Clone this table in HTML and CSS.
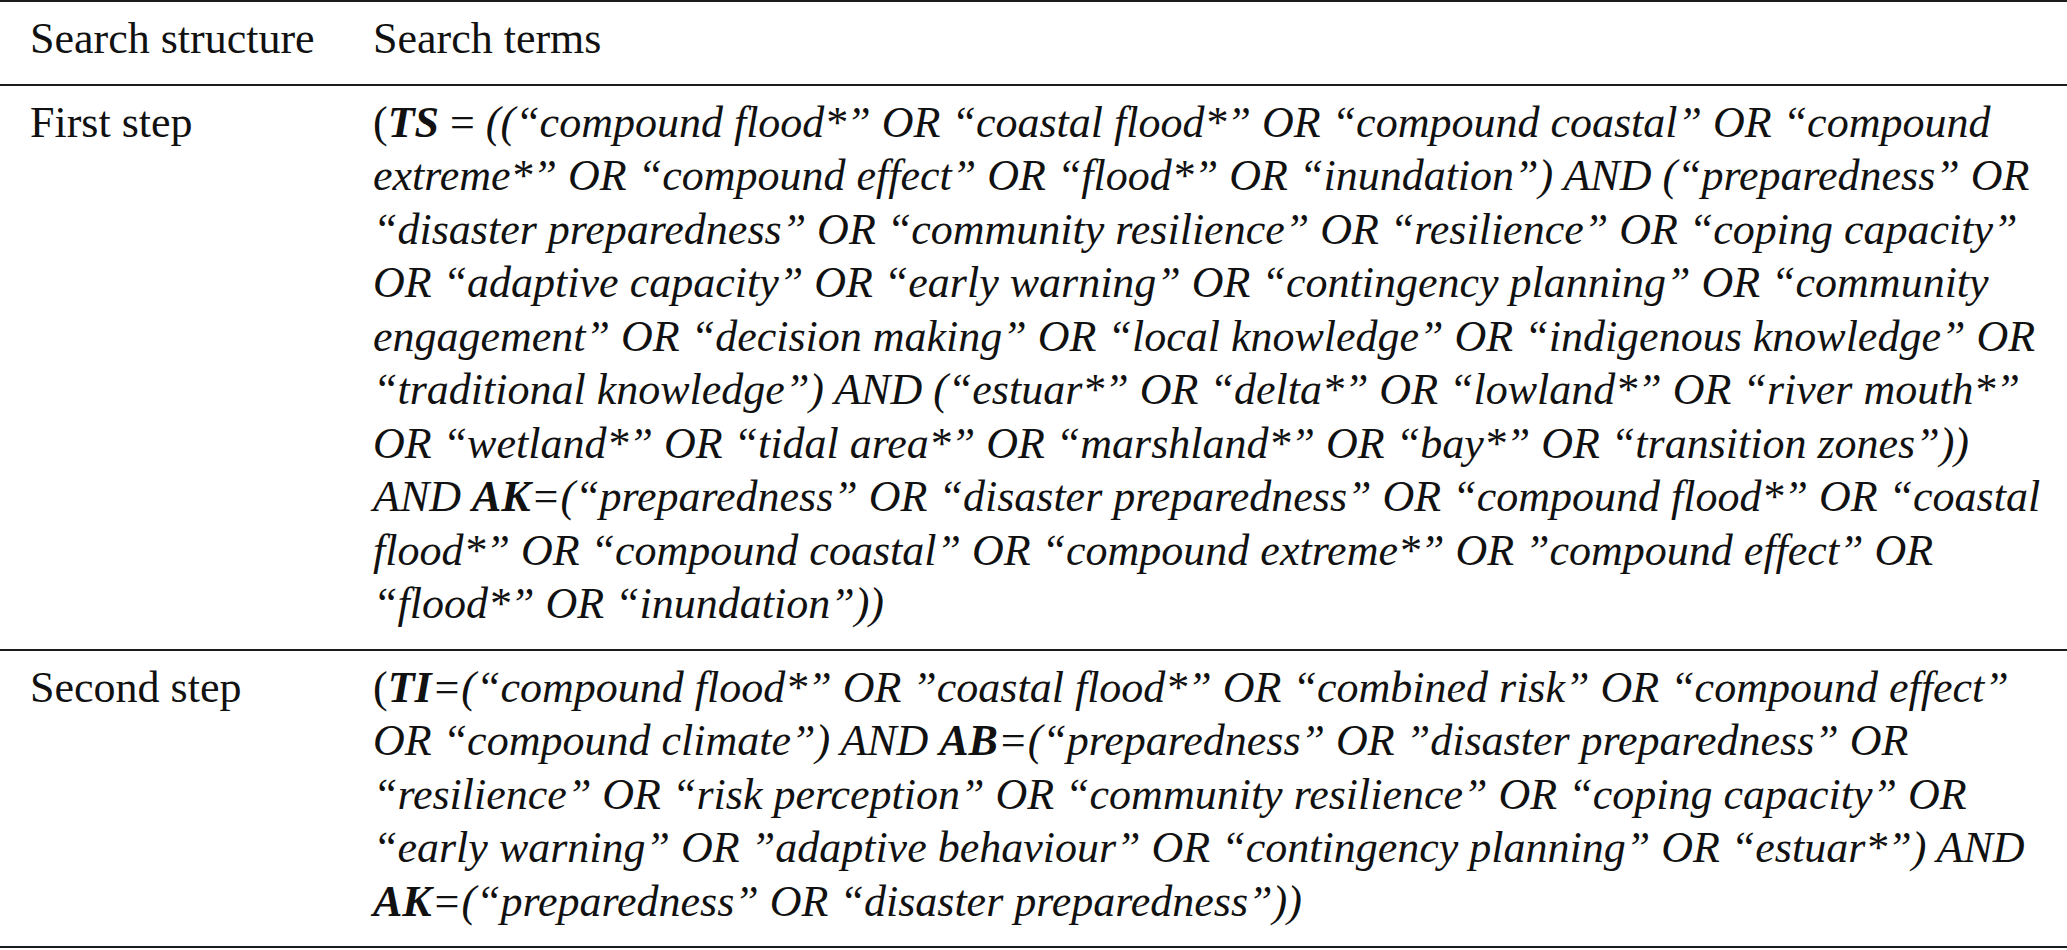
FILE: index.html
```html
<!DOCTYPE html>
<html lang="en">
<head>
<meta charset="utf-8">
<title>Search structure</title>
<link rel="stylesheet" href="styles.css">
</head>
<body>
<div class="table">
  <div class="row head">
    <div class="label">Search structure</div>
    <div class="terms upright">Search terms</div>
  </div>
  <div class="row">
    <div class="label">First step</div>
    <div class="terms"><span class="up">(</span><b>TS</b> <span class="up">=</span> ((“compound flood*” OR “coastal flood*” OR “compound coastal” OR “compound<br>extreme*” OR “compound effect” OR “flood*” OR “inundation”) AND (“preparedness” OR<br>“disaster preparedness” OR “community resilience” OR “resilience” OR “coping capacity”<br>OR “adaptive capacity” OR “early warning” OR “contingency planning” OR “community<br>engagement” OR “decision making” OR “local knowledge” OR “indigenous knowledge” OR<br>“traditional knowledge”) AND (“estuar*” OR “delta*” OR “lowland*” OR “river mouth*”<br>OR “wetland*” OR “tidal area*” OR “marshland*” OR “bay*” OR “transition zones”))<br>AND <b>AK</b>=(“preparedness” OR “disaster preparedness” OR “compound flood*” OR “coastal<br>flood*” OR “compound coastal” OR “compound extreme*” OR ”compound effect” OR<br>“flood*” OR “inundation”))</div>
  </div>
  <div class="row">
    <div class="label">Second step</div>
    <div class="terms"><span class="up">(</span><b>TI</b>=(“compound flood*” OR ”coastal flood*” OR “combined risk” OR “compound effect”<br>OR “compound climate”) AND <b>AB</b>=(“preparedness” OR ”disaster preparedness” OR<br>“resilience” OR “risk perception” OR “community resilience” OR “coping capacity” OR<br>“early warning” OR ”adaptive behaviour” OR “contingency planning” OR “estuar*”) AND<br><b>AK</b>=(“preparedness” OR “disaster preparedness”))</div>
  </div>
</div>
</body>
</html>
```
FILE: styles.css
```css
html, body {
  margin: 0;
  padding: 0;
  background: #ffffff;
}

body {
  font-family: "Liberation Serif", "Times New Roman", serif;
  font-size: 44px;
  line-height: 53.5px;
  color: #111111;
  width: 2067px;
}

.table {
  border-top: 2px solid #1c1c1c;
  display: flex;
  flex-direction: column;
}

.row {
  display: grid;
  grid-template-columns: 373px 1fr;
  padding: 10px 0 18px 0;
  border-bottom: 2px solid #1c1c1c;
}

.label {
  padding-left: 30px;
}

.terms {
  font-style: italic;
  white-space: nowrap;
}

.terms.upright {
  font-style: normal;
}

.terms b {
  font-weight: bold;
  font-style: italic;
}

.up {
  font-style: normal;
}
```
